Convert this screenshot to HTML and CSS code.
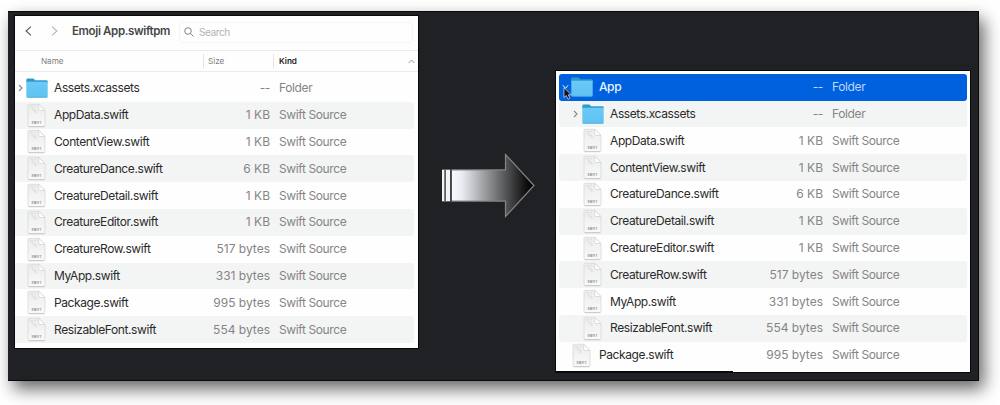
FILE: index.html
```
<!DOCTYPE html>
<html lang="en">
<head>
<meta charset="utf-8">
<title>Emoji App.swiftpm</title>
<link rel="stylesheet" href="styles.css">
</head>
<body>
<svg class="defs" aria-hidden="true">
  <defs>
    <linearGradient id="folderFill" x1="0" y1="0" x2="0" y2="1"><stop offset="0" stop-color="#6bc9f5"/><stop offset="1" stop-color="#5fc2f2"/></linearGradient>
    <linearGradient id="pageFill" x1="0" y1="0" x2="0" y2="1"><stop offset="0" stop-color="#ececec"/><stop offset="1" stop-color="#f9f9f9"/></linearGradient>
    <linearGradient id="arrowFill" x1="0" y1="0" x2="1" y2="0"><stop offset="0" stop-color="#f6f8fc"/><stop offset=".12" stop-color="#e9ecf1"/><stop offset=".9" stop-color="#101010"/><stop offset="1" stop-color="#000"/></linearGradient>
    <symbol id="folder" viewBox="0 0 22 20">
      <path d="M.3 2Q.3.6 1.5.6H7Q7.8.6 8.5 1.6L9 2.2H20.5Q21.7 2.2 21.7 3.4V5H.3Z" fill="#2f9bcd"/>
      <path d="M.3 3.8H21.7V18.5Q21.7 19.6 20.6 19.6H1.4Q.3 19.6.3 18.5Z" fill="url(#folderFill)"/>
      <path d="M.8 19.3H21.2" stroke="#46a3d1" stroke-width=".7"/>
    </symbol>
    <symbol id="page" viewBox="0 0 20 25">
      <path d="M2 1.3H11.7L18 7.5V22.2Q18 23.6 16.7 23.6H2.4Q1 23.6 1 22.2V2.3Q1 1.3 2 1.3Z" fill="url(#pageFill)" stroke="#d9d9d9" stroke-width=".8"/>
      <path d="M1.4 23.7H17.4" stroke="#bcbcbc" stroke-width=".7"/>
      <path d="M11.7 1.3V6.3Q11.7 7.5 12.9 7.5H18Z" fill="#fff" stroke="#d0d0d0" stroke-width=".7"/>
      <path d="M3.2 3.8H6M7.4 3.6H9M4.8 5.8H6.5M5.8 7.2H9M7.2 9H10" stroke="#d4d4d4" stroke-width=".8"/>
      <text x="9.6" y="20.9" class="badge">SWIFT</text>
    </symbol>
  </defs>
</svg>
<main class="board">
  <section class="window source">
    <header class="toolbar">
      <svg class="back" viewBox="0 0 8 12"><path d="M6.8 1 1.2 6 6.8 11"/></svg>
      <svg class="forward" viewBox="0 0 8 12"><path d="M1.2 1 6.8 6 1.2 11"/></svg>
      <h1>Emoji App.swiftpm</h1>
      <div class="search"><svg viewBox="0 0 11 11"><circle cx="4.4" cy="4.4" r="3.6"/><path d="M7.1 7.1 10.3 10.3"/></svg><span>Search</span></div>
    </header>
    <div class="columns"><span class="c-name">Name</span><span class="c-size">Size</span><span class="c-kind">Kind</span><svg viewBox="0 0 7 5"><path d="M.7 4 3.5 1 6.3 4"/></svg></div>
    <div class="rows">
      <div class="row"><svg class="chev" viewBox="0 0 5 8"><path d="M1 1 4 4 1 7"/></svg><svg class="folder"><use href="#folder"/></svg><span class="name">Assets.xcassets</span><span class="size dash">--</span><span class="kind">Folder</span></div>
      <div class="row"><svg class="page"><use href="#page"/></svg><span class="name">AppData.swift</span><span class="size">1 KB</span><span class="kind">Swift Source</span></div>
      <div class="row"><svg class="page"><use href="#page"/></svg><span class="name">ContentView.swift</span><span class="size">1 KB</span><span class="kind">Swift Source</span></div>
      <div class="row"><svg class="page"><use href="#page"/></svg><span class="name">CreatureDance.swift</span><span class="size">6 KB</span><span class="kind">Swift Source</span></div>
      <div class="row"><svg class="page"><use href="#page"/></svg><span class="name">CreatureDetail.swift</span><span class="size">1 KB</span><span class="kind">Swift Source</span></div>
      <div class="row"><svg class="page"><use href="#page"/></svg><span class="name">CreatureEditor.swift</span><span class="size">1 KB</span><span class="kind">Swift Source</span></div>
      <div class="row"><svg class="page"><use href="#page"/></svg><span class="name">CreatureRow.swift</span><span class="size">517 bytes</span><span class="kind">Swift Source</span></div>
      <div class="row"><svg class="page"><use href="#page"/></svg><span class="name">MyApp.swift</span><span class="size">331 bytes</span><span class="kind">Swift Source</span></div>
      <div class="row"><svg class="page"><use href="#page"/></svg><span class="name">Package.swift</span><span class="size">995 bytes</span><span class="kind">Swift Source</span></div>
      <div class="row"><svg class="page"><use href="#page"/></svg><span class="name">ResizableFont.swift</span><span class="size">554 bytes</span><span class="kind">Swift Source</span></div>
    </div>
  </section>
  <svg class="arrow" viewBox="0 0 96 66">
    <path d="M12 18H65.5V2.5L94 33.5 65.5 64.5V49H12Z" fill="url(#arrowFill)"/>
    <path d="M12 17.8H65.5V2.5L94 33.5 65.5 64.5V49.2H12" fill="none" stroke="#858585" stroke-width="1.2"/>
    <path d="M2 17.5H4.5V49.5H2ZM6 17.5H10V49.5H6Z" fill="#f2f3f5"/>
    <path d="M2 17.5H10M2 49.5H10M5.3 17V50M11.1 17V50" stroke="#666" stroke-width="1.2"/>
  </svg>
  <section class="window result">
    <div class="rows">
      <div class="row selected"><svg class="chev open" viewBox="0 0 8 6"><path d="M1 1 4 4.5 7 1"/></svg><svg class="folder"><use href="#folder"/></svg><span class="name">App</span><span class="size dash">--</span><span class="kind">Folder</span>
        <svg class="pointer" viewBox="0 0 9 13"><path d="M1 .8V10.5L3.3 8.5 5 12.2 6.8 11.3 5.2 7.8H8.2Z"/></svg></div>
      <div class="row child"><svg class="chev" viewBox="0 0 5 8"><path d="M1 1 4 4 1 7"/></svg><svg class="folder"><use href="#folder"/></svg><span class="name">Assets.xcassets</span><span class="size dash">--</span><span class="kind">Folder</span></div>
      <div class="row child"><svg class="page"><use href="#page"/></svg><span class="name">AppData.swift</span><span class="size">1 KB</span><span class="kind">Swift Source</span></div>
      <div class="row child"><svg class="page"><use href="#page"/></svg><span class="name">ContentView.swift</span><span class="size">1 KB</span><span class="kind">Swift Source</span></div>
      <div class="row child"><svg class="page"><use href="#page"/></svg><span class="name">CreatureDance.swift</span><span class="size">6 KB</span><span class="kind">Swift Source</span></div>
      <div class="row child"><svg class="page"><use href="#page"/></svg><span class="name">CreatureDetail.swift</span><span class="size">1 KB</span><span class="kind">Swift Source</span></div>
      <div class="row child"><svg class="page"><use href="#page"/></svg><span class="name">CreatureEditor.swift</span><span class="size">1 KB</span><span class="kind">Swift Source</span></div>
      <div class="row child"><svg class="page"><use href="#page"/></svg><span class="name">CreatureRow.swift</span><span class="size">517 bytes</span><span class="kind">Swift Source</span></div>
      <div class="row child"><svg class="page"><use href="#page"/></svg><span class="name">MyApp.swift</span><span class="size">331 bytes</span><span class="kind">Swift Source</span></div>
      <div class="row child"><svg class="page"><use href="#page"/></svg><span class="name">ResizableFont.swift</span><span class="size">554 bytes</span><span class="kind">Swift Source</span></div>
      <div class="row"><svg class="page"><use href="#page"/></svg><span class="name">Package.swift</span><span class="size">995 bytes</span><span class="kind">Swift Source</span></div>
    </div>
  </section>
</main>
</body>
</html>
```
FILE: styles.css
```
* { box-sizing: border-box; }
body { margin: 0; height: 405px; overflow: hidden; background: #fff; font-family: Inter, "Liberation Sans", sans-serif; }
svg { display: block; flex: none; }
.defs { position: absolute; width: 0; height: 0; }
.board { display: flex; align-items: flex-start; width: 971px; height: 370px; margin: 11px 0 0 8px; padding: 4px 0 0 7px; background: #202125; border: solid #08090b; border-width: 1px 1px 1px 0; box-shadow: 5px 8px 16px rgba(0,0,0,.6); }
.window { flex: none; background: #fefefe; outline: 1px solid #08090a; overflow: hidden; }
.source { width: 403px; height: 332px; }
.toolbar { display: flex; align-items: center; height: 35px; padding: 0 5px 4px 10px; border-bottom: 1px solid #ebebeb; }
.toolbar > svg { width: 7px; height: 12px; fill: none; stroke-width: 1.2; }
.back { stroke: #555; }
.forward { margin-left: 19px; stroke: #b2b2b2; }
h1 { margin: 0 0 0 14px; width: 107px; font-size: 11.5px; font-weight: 600; line-height: 16px; letter-spacing: -.36px; color: #474747; white-space: nowrap; }
.search { display: flex; align-items: center; flex: 1; height: 21px; padding-left: 4px; margin-top: 2px; border: 1px solid #f6f6f6; border-radius: 3px; font-size: 10.2px; letter-spacing: -.5px; color: #b4b4b4; }
.search svg { width: 10px; height: 10px; margin-right: 5px; fill: none; stroke: #777; stroke-width: 1; }
.columns { display: flex; align-items: center; height: 21px; border-bottom: 1px solid #ebebeb; font-size: 8.2px; letter-spacing: -.05px; color: #808080; }
.columns span { height: 14px; line-height: 14px; }
.c-name { width: 188px; padding-left: 26px; }
.c-size { width: 70px; padding-left: 4px; border-left: 1px solid #e4e4e4; }
.c-kind { width: 135px; padding-left: 5px; border-left: 1px solid #e4e4e4; color: #222; font-weight: 600; }
.columns svg { width: 7px; height: 5px; fill: none; stroke: #999; }
.rows { display: flex; flex-direction: column; }
.source .rows { margin-right: 4px; padding-top: 3px; }
.row { position: relative; display: flex; align-items: center; height: 26.8px; flex: none; font-size: 12px; line-height: 18px; white-space: nowrap; border-radius: 0 3px 3px 0; }
.source .row:nth-child(even), .result .row:nth-child(even) { background: #f3f4f4; }
.row .folder { width: 22px; height: 20px; margin: 0 6px 0 3px; }
.chev { width: 5px; height: 8px; margin-left: 3px; fill: none; stroke: #888; stroke-width: 1.1; }
.row .page { width: 20px; height: 25px; margin: 0 7px 0 12px; }
.name { flex: 1; color: #2b2b2b; letter-spacing: -.4px; }
.size { width: 76px; text-align: right; color: #858585; }
.kind { width: 144px; padding-left: 9px; color: #858585; letter-spacing: -.38px; }
.dash { letter-spacing: -.4px; }
.arrow { width: 96px; height: 66px; margin: 136px 0 0 22px; }
.result { position: relative; width: 414px; height: 301px; margin: 55px 0 0 20px; padding: 2.9px 3px 0; }
.result::after { content: ""; position: absolute; left: 0; bottom: 0; width: 177px; height: 1px; background: #08090a; }
.result .row { border-radius: 3px; }
.result .row .page { margin-left: 13px; }
.result .row .folder { margin-left: 4px; }
.result .child { padding-left: 11px; }
.row.selected { background: #0061df; color: #fff; }
.selected .name { color: #eef5ff; font-weight: 500; }
.selected .size, .selected .kind { color: #bcd7fa; }
.chev.open { width: 7px; height: 6px; margin: 0 -2px 0 3px; stroke: #fff; }
.pointer { position: absolute; left: 4px; top: 13px; width: 9px; height: 13px; fill: #111; stroke: #fff; stroke-width: .6; }
.badge { font: 700 2.9px Inter, sans-serif; letter-spacing: .2px; text-anchor: middle; fill: #888; }
.source .size { width: 80px; }
```
